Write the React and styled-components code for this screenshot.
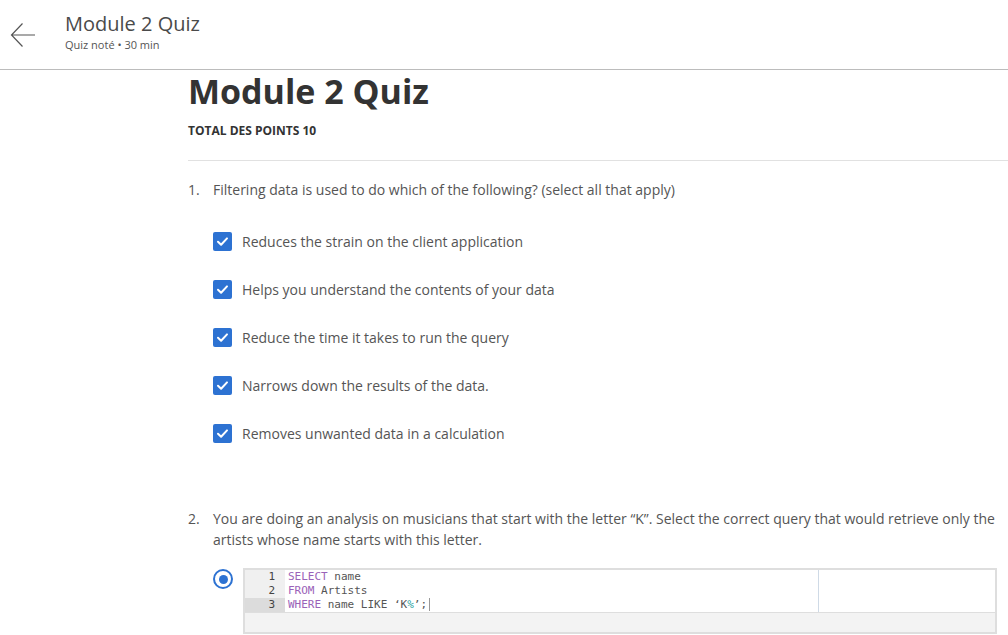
import React from "react";
import styled, { createGlobalStyle } from "styled-components";

const GlobalStyle = createGlobalStyle`
  body {
    margin: 0;
    font-family: "Open Sans", "Liberation Sans", sans-serif;
    color: #555;
    background: #fff;
  }
`;

const Header = styled.header`
  display: flex;
  align-items: center;
  height: 69px;
  border-bottom: 1px solid #bcbcbc;
`;

const BackButton = styled.button`
  display: flex;
  align-items: center;
  justify-content: center;
  width: 46px;
  height: 46px;
  margin: 0 19px 0 0;
  padding: 0;
  border: none;
  background: none;
  color: #555;
  cursor: pointer;
`;

const HeaderText = styled.div`
  display: flex;
  flex-direction: column;
  margin-top: -7px;
`;

const HeaderTitle = styled.div`
  font-size: 20px;
  line-height: 27px;
  color: #4a4a4a;
`;

const HeaderSub = styled.div`
  font-size: 11px;
  line-height: 15px;
  color: #555;
`;

const Main = styled.main`
  padding-left: 188px;
`;

const Title = styled.h1`
  margin: 1px 0 0;
  font-size: 34px;
  line-height: 40px;
  font-weight: 700;
  color: #333;
`;

const Points = styled.div`
  margin-top: 12px;
  font-size: 12px;
  line-height: 16px;
  font-weight: 700;
  color: #333;
`;

const Divider = styled.hr`
  margin: 21px 0 0;
  border: none;
  border-top: 1px solid #e1e1e1;
`;

const Question = styled.section`
  padding-right: 11px;
  margin-top: ${(p) => p.gap}px;
`;

const Prompt = styled.div`
  display: flex;
  font-size: 14px;
  line-height: 21px;
  color: #555;
`;

const Num = styled.span`
  flex: 0 0 25px;
`;

const Options = styled.div`
  margin: 17px 0 0 25px;
`;

const OptionRow = styled.label`
  display: flex;
  align-items: center;
  gap: 10px;
  height: 48px;
  font-size: 14px;
  color: #555;
`;

const Box = styled.span`
  display: flex;
  align-items: center;
  justify-content: center;
  width: 19px;
  height: 19px;
  border-radius: 2px;
  background: #2d72d2;
`;

const AnswerRow = styled.div`
  display: flex;
  align-items: flex-start;
  gap: 10px;
  margin: 18px 0 0 25px;
`;

const Radio = styled.span`
  flex: 0 0 auto;
  display: flex;
  align-items: center;
  justify-content: center;
  box-sizing: border-box;
  width: 20px;
  height: 20px;
  margin-top: 1px;
  border: 2.5px solid #2d72d2;
  border-radius: 50%;

  &::after {
    content: "";
    width: 9px;
    height: 9px;
    border-radius: 50%;
    background: #2d72d2;
  }
`;

const Editor = styled.div`
  flex: 1;
  border: 2px solid #dedede;
  background: #fff;
`;

const CodeArea = styled.div`
  position: relative;
  font-family: "DejaVu Sans Mono", "Liberation Mono", monospace;
  font-size: 11px;
  line-height: 14px;
  color: #555;
  background: linear-gradient(#f0f0f0, #f0f0f0) left / 40px 100% no-repeat;
`;

const PrintMargin = styled.div`
  position: absolute;
  top: 0;
  bottom: 0;
  left: 573px;
  width: 1px;
  background: #cfdae6;
`;

const Line = styled.div`
  display: flex;
`;

const Gutter = styled.span`
  flex: 0 0 40px;
  box-sizing: border-box;
  padding-right: 10px;
  text-align: right;
  color: #444;
  background: ${(p) => (p.active ? "#dcdcdc" : "transparent")};
`;

const Code = styled.span`
  padding-left: 3px;
  white-space: pre;
`;

const Kw = styled.span`
  color: #9a62b8;
`;

const Str = styled.span`
  color: #2aa3a3;
`;

const Cursor = styled.span`
  display: inline-block;
  width: 1px;
  height: 13px;
  margin-left: 2px;
  vertical-align: -3px;
  background: #999;
`;

const EditorFooter = styled.div`
  height: 19px;
  border-top: 1px solid #dedede;
  background: #f3f3f3;
`;

const Check = () => (
  <Box>
    <svg width="13" height="13" viewBox="0 0 13 13" fill="none">
      <path d="M2 6.8 L5.1 9.8 L11 3.4" stroke="#fff" strokeWidth="2" strokeLinecap="round" strokeLinejoin="round" />
    </svg>
  </Box>
);

const options = [
  "Reduces the strain on the client application",
  "Helps you understand the contents of your data",
  "Reduce the time it takes to run the query",
  "Narrows down the results of the data.",
  "Removes unwanted data in a calculation",
];

export default function App() {
  return (
    <>
      <GlobalStyle />
      <Header>
        <BackButton aria-label="Retour">
          <svg width="26" height="26" viewBox="0 0 26 26" fill="none">
            <path d="M25 13 H1.5 M12.5 1.5 L1.5 13 L12.5 24.5" stroke="#555" strokeWidth="1.2" />
          </svg>
        </BackButton>
        <HeaderText>
          <HeaderTitle>Module 2 Quiz</HeaderTitle>
          <HeaderSub>Quiz noté • 30 min</HeaderSub>
        </HeaderText>
      </Header>
      <Main>
        <Title>Module 2 Quiz</Title>
        <Points>TOTAL DES POINTS 10</Points>
        <Divider />
        <Question gap={18}>
          <Prompt>
            <Num>1.</Num>
            <span>Filtering data is used to do which of the following? (select all that apply)</span>
          </Prompt>
          <Options>
            {options.map((text) => (
              <OptionRow key={text}>
                <Check />
                {text}
              </OptionRow>
            ))}
          </Options>
        </Question>
        <Question gap={51}>
          <Prompt>
            <Num>2.</Num>
            <span>
              You are doing an analysis on musicians that start with the letter “K”. Select the correct query
              that would retrieve only the artists whose name starts with this letter.
            </span>
          </Prompt>
          <AnswerRow>
            <Radio />
            <Editor>
              <CodeArea>
                <PrintMargin />
                <Line>
                  <Gutter>1</Gutter>
                  <Code><Kw>SELECT</Kw> name</Code>
                </Line>
                <Line>
                  <Gutter>2</Gutter>
                  <Code><Kw>FROM</Kw> Artists</Code>
                </Line>
                <Line>
                  <Gutter active>3</Gutter>
                  <Code>
                    <Kw>WHERE</Kw> name LIKE ‘K<Str>%</Str>’;<Cursor />
                  </Code>
                </Line>
              </CodeArea>
              <EditorFooter />
            </Editor>
          </AnswerRow>
        </Question>
      </Main>
    </>
  );
}
